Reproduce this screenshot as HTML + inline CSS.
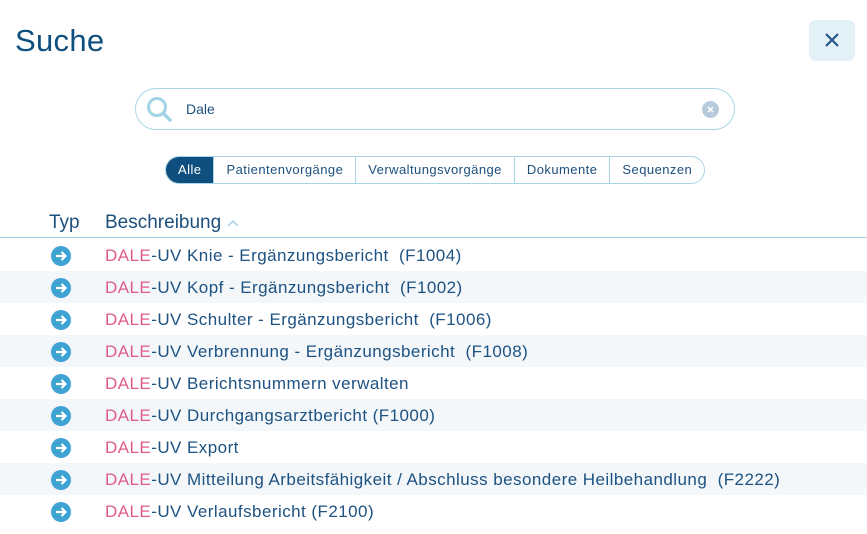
<!DOCTYPE html>
<html><head><meta charset="utf-8"><style>
*{margin:0;padding:0;box-sizing:border-box}
body{width:867px;height:534px;background:#fff;font-family:"Liberation Sans",sans-serif;color:#1d5283;position:relative;overflow:hidden}
h1{position:absolute;left:15px;top:23px;font-size:31px;font-weight:normal;color:#0f4f7f;letter-spacing:0.3px}
.close{position:absolute;left:809px;top:20px;width:46px;height:41px;background:#e2f0f7;border-radius:7px}
.search{position:absolute;left:135px;top:88px;width:600px;height:42px;border:1px solid #a9d6e6;border-radius:21px}
.search .t{position:absolute;left:50px;top:12px;font-size:14px;color:#1d4f7c}
.clr{position:absolute;left:566px;top:12px;width:17px;height:17px;border-radius:50%;background:#b8cbdc}
.tabs{position:absolute;left:165px;top:156px;height:28px;display:flex;border:1px solid #a9d6e6;border-radius:14px;overflow:hidden;font-size:13px;letter-spacing:0.45px}
.tabs div{padding:0 12px;line-height:26px;border-left:1px solid #a9d6e6;color:#1d4f7c}
.tabs div:first-child{border-left:none;background:#0f4f7f;color:#fff;padding:0 12px}
.hdr{position:absolute;top:212px;font-size:19px;color:#1d4f7c}
.line{position:absolute;left:0;top:237px;width:867px;height:1px;background:#9fd3e5}
.rows{position:absolute;left:0;top:239px;width:867px}
.r{height:32px;position:relative;font-size:17px;line-height:32px;color:#1d5283;letter-spacing:0.45px}
.r:nth-child(even){background:#f3f7f9}
.r span.p{color:#e05a8e}
.r .tx{position:absolute;left:105px;top:1px;white-space:pre}
.r svg{position:absolute;left:51px;top:7px}
</style></head><body>
<h1>Suche</h1>
<div class="close"><svg width="46" height="41"><path d="M17 14L29 26M29 14L17 26" stroke="#1d5283" stroke-width="2"/></svg></div>
<div class="search">
<svg style="position:absolute;left:8px;top:5px" width="30" height="30"><circle cx="13" cy="13" r="8.5" fill="none" stroke="#a3d3e6" stroke-width="3"/><path d="M19 19L26 26" stroke="#a3d3e6" stroke-width="3.5" stroke-linecap="round"/></svg>
<div class="t">Dale</div>
<div class="clr"><svg width="17" height="17"><path d="M6 6L11 11M11 6L6 11" stroke="#fff" stroke-width="1.5"/></svg></div>
</div>
<div class="tabs"><div>Alle</div><div>Patientenvorgänge</div><div>Verwaltungsvorgänge</div><div>Dokumente</div><div>Sequenzen</div></div>
<div class="hdr" style="left:49px">Typ</div>
<div class="hdr" style="left:105px">Beschreibung <svg width="14" height="10"><path d="M2 8L7 3L12 8" fill="none" stroke="#a3d3e6" stroke-width="1.5"/></svg></div>
<div class="line"></div>
<div class="rows">
<div class="r"><svg width="20" height="20"><circle cx="10" cy="10" r="10" fill="#3ea3d2"/><path d="M5 10H14M10.5 6L14.5 10L10.5 14" fill="none" stroke="#fff" stroke-width="2.2"/></svg><div class="tx"><span class="p">DALE</span>-UV Knie - Ergänzungsbericht  (F1004)</div></div>
<div class="r"><svg width="20" height="20"><circle cx="10" cy="10" r="10" fill="#3ea3d2"/><path d="M5 10H14M10.5 6L14.5 10L10.5 14" fill="none" stroke="#fff" stroke-width="2.2"/></svg><div class="tx"><span class="p">DALE</span>-UV Kopf - Ergänzungsbericht  (F1002)</div></div>
<div class="r"><svg width="20" height="20"><circle cx="10" cy="10" r="10" fill="#3ea3d2"/><path d="M5 10H14M10.5 6L14.5 10L10.5 14" fill="none" stroke="#fff" stroke-width="2.2"/></svg><div class="tx"><span class="p">DALE</span>-UV Schulter - Ergänzungsbericht  (F1006)</div></div>
<div class="r"><svg width="20" height="20"><circle cx="10" cy="10" r="10" fill="#3ea3d2"/><path d="M5 10H14M10.5 6L14.5 10L10.5 14" fill="none" stroke="#fff" stroke-width="2.2"/></svg><div class="tx"><span class="p">DALE</span>-UV Verbrennung - Ergänzungsbericht  (F1008)</div></div>
<div class="r"><svg width="20" height="20"><circle cx="10" cy="10" r="10" fill="#3ea3d2"/><path d="M5 10H14M10.5 6L14.5 10L10.5 14" fill="none" stroke="#fff" stroke-width="2.2"/></svg><div class="tx"><span class="p">DALE</span>-UV Berichtsnummern verwalten</div></div>
<div class="r"><svg width="20" height="20"><circle cx="10" cy="10" r="10" fill="#3ea3d2"/><path d="M5 10H14M10.5 6L14.5 10L10.5 14" fill="none" stroke="#fff" stroke-width="2.2"/></svg><div class="tx"><span class="p">DALE</span>-UV Durchgangsarztbericht (F1000)</div></div>
<div class="r"><svg width="20" height="20"><circle cx="10" cy="10" r="10" fill="#3ea3d2"/><path d="M5 10H14M10.5 6L14.5 10L10.5 14" fill="none" stroke="#fff" stroke-width="2.2"/></svg><div class="tx"><span class="p">DALE</span>-UV Export</div></div>
<div class="r"><svg width="20" height="20"><circle cx="10" cy="10" r="10" fill="#3ea3d2"/><path d="M5 10H14M10.5 6L14.5 10L10.5 14" fill="none" stroke="#fff" stroke-width="2.2"/></svg><div class="tx"><span class="p">DALE</span>-UV Mitteilung Arbeitsfähigkeit / Abschluss besondere Heilbehandlung  (F2222)</div></div>
<div class="r"><svg width="20" height="20"><circle cx="10" cy="10" r="10" fill="#3ea3d2"/><path d="M5 10H14M10.5 6L14.5 10L10.5 14" fill="none" stroke="#fff" stroke-width="2.2"/></svg><div class="tx"><span class="p">DALE</span>-UV Verlaufsbericht (F2100)</div></div>
</div>
</body></html>
